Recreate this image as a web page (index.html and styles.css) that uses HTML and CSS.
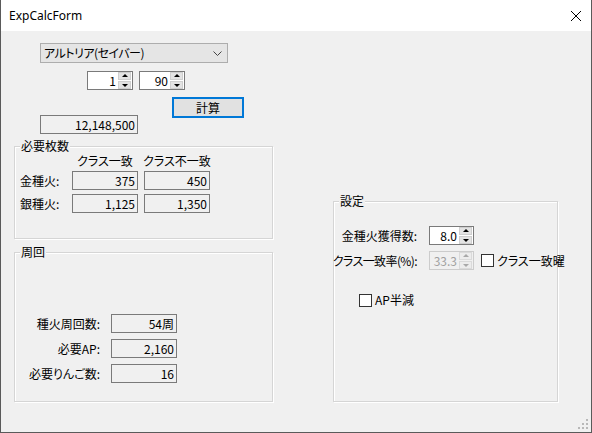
FILE: index.html
```html
<!DOCTYPE html>
<html lang="ja">
<head>
<meta charset="utf-8">
<title>ExpCalcForm</title>
<link rel="stylesheet" href="styles.css">
</head>
<body>
<div class="window">
  <div class="titlebar">
    <span class="title">ExpCalcForm</span>
    <svg class="close" width="12" height="12" viewBox="0 0 12 12"><path d="M1 1L11 11M11 1L1 11" stroke="#000" stroke-width="1" fill="none"/></svg>
  </div>
  <div class="client">
    <div class="left">
      <div class="combo">
        <span class="combo-text">アルトリア(セイバー)</span>
        <svg class="chev" width="9" height="5" viewBox="0 0 9 5"><path d="M0.5 0.5L4.5 4.5L8.5 0.5" stroke="#444" stroke-width="1" fill="none"/></svg>
      </div>
      <div class="spins">
        <div class="spin"><span class="val">1</span><div class="ud"><span class="up"></span><span class="dn"></span></div></div>
        <div class="spin"><span class="val">90</span><div class="ud"><span class="up"></span><span class="dn"></span></div></div>
      </div>
      <div class="btn">計算</div>
      <div class="box result">12,148,500</div>

      <div class="group g1">
        <span class="legend">必要枚数</span>
        <div class="grid1">
          <span></span><span class="hdr">クラス一致</span><span class="hdr">クラス不一致</span>
          <span class="lbl">金種火:</span><div class="box">375</div><div class="box">450</div>
          <span class="lbl">銀種火:</span><div class="box">1,125</div><div class="box">1,350</div>
        </div>
      </div>

      <div class="group g2">
        <span class="legend">周回</span>
        <div class="grid2">
          <span class="lbl r">種火周回数:</span><div class="box">54周</div>
          <span class="lbl r">必要AP:</span><div class="box">2,160</div>
          <span class="lbl r">必要りんご数:</span><div class="box">16</div>
        </div>
      </div>
    </div>

    <div class="right">
      <div class="group g3">
        <span class="legend">設定</span>
        <div class="grid3">
          <span class="lbl r">金種火獲得数:</span>
          <div class="spin s3"><span class="val">8.0</span><div class="ud"><span class="up"></span><span class="dn"></span></div></div>
          <span></span>
          <span class="lbl r tight">クラス一致率(%):</span>
          <div class="spin s3 disabled"><span class="val">33.3</span><div class="ud"><span class="up"></span><span class="dn"></span></div></div>
          <label class="chk"><span class="cb"></span><span>クラス一致曜</span></label>
        </div>
        <label class="chk ap"><span class="cb"></span><span>AP半減</span></label>
      </div>
    </div>

    <svg class="grip" width="10" height="10" viewBox="0 0 10 10">
      <rect x="8" y="0" width="2" height="2" fill="#b8b8b8"/>
      <rect x="4" y="4" width="2" height="2" fill="#b8b8b8"/>
      <rect x="8" y="4" width="2" height="2" fill="#b8b8b8"/>
      <rect x="0" y="8" width="2" height="2" fill="#b8b8b8"/>
      <rect x="4" y="8" width="2" height="2" fill="#b8b8b8"/>
      <rect x="8" y="8" width="2" height="2" fill="#b8b8b8"/>
    </svg>
  </div>
</div>
</body>
</html>
```

FILE: styles.css
```css
html, body {
  margin: 0;
  padding: 0;
  background: #f0f0f0;
}
* { box-sizing: border-box; }

.window {
  width: 592px;
  height: 433px;
  border-left: 1px solid #5a5a5a;
  border-right: 1px solid #5a5a5a;
  border-bottom: 1px solid #5a5a5a;
  display: flex;
  flex-direction: column;
  font-family: "Noto Sans CJK JP", sans-serif;
  font-feature-settings: "palt";
  font-size: 12px;
  line-height: 14px;
  color: #000;
  white-space: nowrap;
}

.titlebar {
  height: 31px;
  background: #fff;
  display: flex;
  align-items: center;
  justify-content: space-between;
  padding: 0 9px 0 8px;
  flex: none;
}
.title {
  font-family: "Noto Sans", sans-serif;
  font-feature-settings: normal;
  font-size: 12px;
  color: #000;
}
.close { display: block; }

.client {
  flex: 1;
  position: relative;
  display: flex;
  align-items: flex-start;
  background: #f0f0f0;
}

.left {
  margin-left: 13px;
  width: 259px;
  display: flex;
  flex-direction: column;
  align-items: flex-start;
}

.combo {
  margin: 12px 0 0 26px;
  width: 188px;
  height: 20px;
  border: 1px solid #adadad;
  background: #e5e5e5;
  display: flex;
  align-items: center;
  justify-content: space-between;
  padding: 0 5px 0 3px;
}
.combo-text { letter-spacing: -0.5px; }
.chev { display: block; }

.spins {
  margin: 8px 0 0 73px;
  display: flex;
  gap: 6px;
}
.spin {
  width: 46px;
  height: 19px;
  border: 1px solid #7a7a7a;
  background: #fff;
  display: flex;
  align-items: center;
  justify-content: flex-end;
}
.spin .val {
  padding-right: 1px;
}
.ud {
  width: 15px;
  height: 17px;
  display: flex;
  flex-direction: column;
  gap: 1px;
  padding: 0 1px;
}
.ud span {
  flex: 1;
  background: #e3e3e3;
  border: 1px solid #cfcfcf;
  position: relative;
}
.ud .up::after, .ud .dn::after {
  content: "";
  position: absolute;
  left: 50%;
  top: 50%;
  margin-left: -3px;
  border-left: 3px solid transparent;
  border-right: 3px solid transparent;
}
.ud .up::after {
  margin-top: -2px;
  border-bottom: 3px solid #000;
}
.ud .dn::after {
  margin-top: -1px;
  border-top: 3px solid #000;
}
.spin.disabled {
  border-color: #cccccc;
  background: #f0f0f0;
  color: #a0a0a0;
}
.spin.disabled .ud span { background: #ececec; border-color: #dadada; }
.spin.disabled .ud .up::after { border-bottom-color: #a8a8a8; }
.spin.disabled .ud .dn::after { border-top-color: #a8a8a8; }

.btn {
  margin: 7px 0 0 158px;
  width: 72px;
  height: 21px;
  border: 2px solid #0078d7;
  background: #e1e1e1;
  display: flex;
  align-items: center;
  justify-content: center;
  padding-top: 1px;
}

.box {
  width: 66px;
  height: 19px;
  border: 1px solid #7a7a7a;
  background: #f0f0f0;
  display: flex;
  align-items: center;
  justify-content: flex-end;
  padding-right: 2px;
}
.result {
  margin: -3px 0 0 26px;
  width: 98px;
}

.group {
  position: relative;
  border: 1px solid #d5d5d5;
  box-shadow: inset 1px 1px 0 #fff, 1px 1px 0 #fff;
}
.legend {
  position: absolute;
  top: -8px;
  left: 5px;
  padding: 0 1px;
  background: #f0f0f0;
}

.g1 {
  margin-top: 12px;
  width: 259px;
  height: 93px;
}
.grid1 {
  display: grid;
  grid-template-columns: 46px 66px 66px;
  grid-template-rows: 13px 19px 19px;
  column-gap: 6px;
  row-gap: 4px;
  padding: 7px 0 0 5px;
  align-items: center;
}
.hdr { justify-self: center; }

.g2 {
  margin-top: 13px;
  width: 259px;
  height: 150px;
}
.grid2 {
  display: grid;
  grid-template-columns: 85px 66px;
  grid-auto-rows: 19px;
  column-gap: 11px;
  row-gap: 6px;
  padding-top: 61px;
  align-items: center;
}
.lbl.r { justify-self: end; }
.lbl.tight { letter-spacing: -0.6px; }

.right {
  margin-left: 60px;
}
.g3 {
  margin-top: 170px;
  width: 225px;
  height: 201px;
}
.grid3 {
  display: grid;
  grid-template-columns: 83px 45px max-content;
  grid-auto-rows: 19px;
  column-gap: 12px;
  row-gap: 6px;
  padding-top: 24px;
  align-items: center;
}
.spin.s3 { width: 45px; }
.grid3 .chk { margin-left: -5px; }

.chk {
  display: flex;
  align-items: center;
  gap: 3px;
}
.cb {
  width: 13px;
  height: 13px;
  border: 1px solid #333;
  background: #fff;
  flex: none;
}
.chk.ap {
  margin: 23px 0 0 25px;
  width: max-content;
}

.grip {
  position: absolute;
  right: 3px;
  bottom: 3px;
}
```
